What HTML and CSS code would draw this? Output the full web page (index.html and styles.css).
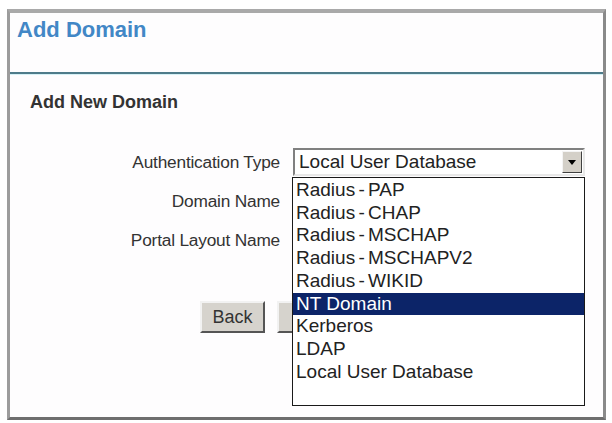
FILE: index.html
```html
<!DOCTYPE html>
<html>
<head>
    <title>Add Domain</title>
    <meta charset="utf-8"/>
    <link rel="stylesheet" href="styles.css">
</head>
<body>
    <div class="panel">
        <div class="panel-head">
            <h1>Add Domain</h1>
        </div>
        <div class="panel-body">
            <h2>Add New Domain</h2>
            <div class="form">
                <div class="label">Authentication Type</div>
                <div class="field">
                    <div class="select">
                        <span class="select-value">Local User Database</span>
                        <span class="select-arrow"><span class="tri"></span></span>
                    </div>
                    <ul class="options">
                        <li class="tight">Radius - PAP</li>
                        <li class="tight">Radius - CHAP</li>
                        <li class="tight">Radius - MSCHAP</li>
                        <li class="tight">Radius - MSCHAPV2</li>
                        <li class="tight">Radius - WIKID</li>
                        <li class="selected">NT Domain</li>
                        <li>Kerberos</li>
                        <li>LDAP</li>
                        <li>Local User Database</li>
                    </ul>
                </div>
                <div class="label">Domain Name</div>
                <div class="field"></div>
                <div class="label">Portal Layout Name</div>
                <div class="field"></div>
            </div>
            <div class="buttons">
                <button class="btn">Back</button>
                <button class="btn" aria-label="Apply"></button>
            </div>
        </div>
    </div>
</body>
</html>
```

FILE: styles.css
```css
body {
    margin: 0;
    background-color: #ffffff;
    font-family: "Liberation Sans", Arial, sans-serif;
    color: #333333;
}

.panel {
    margin: 9px 6px 0 7px;
    height: 404px;
    border-top: 4px solid #a9a9a9;
    border-left: 3px solid #9c9c9c;
    border-right: 3px solid #8a8a8a;
    border-bottom: 3px solid #6e6e6e;
    background-color: #fefdfe;
}

.panel-head {
    height: 59px;
    border-bottom: 2px solid #4e7b8a;
    box-shadow: 0 1px 0 #d6f1f6;
}

.panel-head h1 {
    margin: 0;
    padding: 4px 0 0 7px;
    font-size: 22px;
    font-weight: bold;
    color: #4287c6;
}

.panel-body {
    padding: 18px 0 0 20px;
}

.panel-body h2 {
    margin: 0;
    font-size: 18px;
    font-weight: bold;
    color: #333333;
}

.form {
    display: grid;
    grid-template-columns: 250px 293px;
    grid-auto-rows: 39px;
    column-gap: 12px;
    margin-top: 35px;
}

.label {
    font-size: 17.3px;
    text-align: right;
    line-height: 28px;
    letter-spacing: -0.2px;
}

.field {
    position: relative;
}

.select {
    display: flex;
    align-items: stretch;
    height: 28px;
    margin-left: 1px;
    box-sizing: border-box;
    border: 2px solid;
    border-color: #808080 #e8e8e8 #e8e8e8 #808080;
    background-color: #ffffff;
}

.select-value {
    flex: 1;
    font-size: 19px;
    line-height: 24px;
    padding-left: 4px;
    color: #222222;
}

.select-arrow {
    width: 20px;
    margin: 1px;
    box-sizing: border-box;
    border: 1px solid;
    border-color: #f4f4f4 #404040 #404040 #f4f4f4;
    background-color: #d4d0c8;
    display: flex;
    align-items: center;
    justify-content: center;
}

.tri {
    width: 0;
    height: 0;
    border-left: 4px solid transparent;
    border-right: 4px solid transparent;
    border-top: 5px solid #000000;
}

.options {
    position: absolute;
    top: 29px;
    left: 0;
    width: 293px;
    height: 229px;
    margin: 0;
    padding: 1px 0 0;
    box-sizing: border-box;
    list-style: none;
    border: 1px solid #1a1a1a;
    background-color: #ffffff;
    z-index: 2;
}

.options li {
    font-size: 19px;
    line-height: 22.7px;
    padding-left: 3px;
    color: #222222;
    white-space: nowrap;
}

.options li.tight {
    word-spacing: -2px;
}

.options li.selected {
    background-color: #0c2468;
    color: #ffffff;
}

.buttons {
    display: flex;
    gap: 12px;
    margin: 36px 0 0 170px;
}

.btn {
    width: 65px;
    height: 32px;
    font-family: "Liberation Sans", Arial, sans-serif;
    font-size: 18px;
    color: #333333;
    background-color: #d6d3cd;
    border: 2px solid;
    border-color: #f2f2f2 #555555 #555555 #f2f2f2;
    padding: 0;
}
```
